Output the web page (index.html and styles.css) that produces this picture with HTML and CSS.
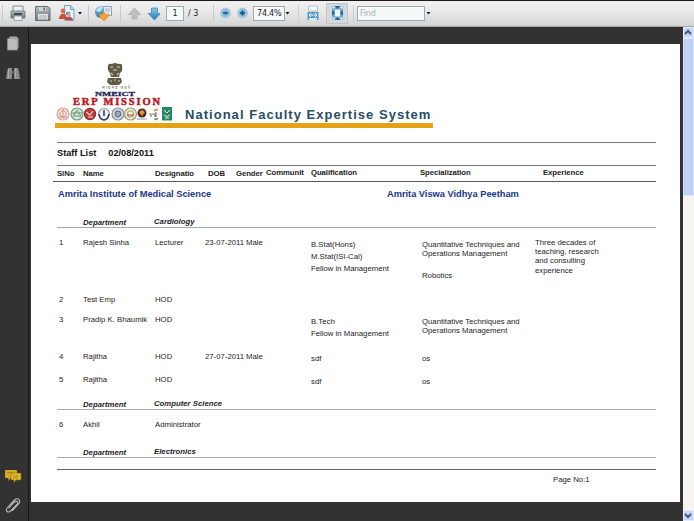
FILE: index.html
```html
<!DOCTYPE html>
<html lang="en">
<head>
<meta charset="utf-8">
<title>Staff List</title>
<link rel="stylesheet" href="styles.css">
</head>
<body>
<header class="toolbar">
  <svg width="160" height="26" viewBox="0 0 160 26">
    <defs>
      <linearGradient id="blue" x2="0" y2="1"><stop stop-color="#8cc8ec"/><stop offset="1" stop-color="#2377b4"/></linearGradient>
      <linearGradient id="metal" x2="0" y2="1"><stop stop-color="#b4bcc0"/><stop offset="1" stop-color="#6d757a"/></linearGradient>
      <radialGradient id="orb"><stop offset=".2" stop-color="#57a4d3"/><stop offset=".65" stop-color="#8cc5e6"/><stop offset="1" stop-color="#a9c4d4"/></radialGradient>
    </defs>
    <path d="M2.500 5v17M88.500 5v17M120.500 5v17" stroke="#c9c9c9"/>
    <path d="M13 6h10v6H13z" fill="#e9eff2" stroke="#858d91"/>
    <path d="M11 11h14v7H11z" fill="url(#metal)" stroke="#646b6f" stroke-width=".7"/>
    <path d="M14 13h8v2h-8z" fill="#454c50"/>
    <path d="M14 16h8v4.500h-8z" fill="#edf1f3" stroke="#7c8488" stroke-width=".7"/>
    <path d="M35.500 6.500H48l2 2v12H35.500z" fill="url(#metal)" stroke="#697176"/>
    <path d="M39 7h7v4h-7z" fill="#cdd4d7"/><path d="M43.500 7.500h1.500v3h-1.500z" fill="#5f676c"/>
    <path d="M38 14h10v5.500H38z" fill="#e2e6e8"/><path d="M39 16h8M39 18h8" stroke="#8b9397" stroke-width=".7"/>
    <path d="M64.500 5.500h6l3.500 3.500v11h-9.500z" fill="#e9f3f9" stroke="#6ea6c9"/>
    <path d="M70.500 5.500v4H74" fill="#b5d8ec" stroke="#6ea6c9"/>
    <circle cx="63" cy="11" r="2.400" fill="#dc6b51"/><path d="M59 19c0-7 8-7 8 0z" fill="#cf4b3c"/>
    <path d="M66 12h4v3h-4z" fill="#4b9bcb"/><circle cx="69" cy="15" r="2" fill="#e5a38b"/><path d="M65 20.500c0-5 8-5 8 0z" fill="#a95555"/>
    <path d="M78 12h4l-2 2.500z" fill="#111"/>
    <circle cx="101" cy="12" r="6" fill="url(#blue)"/><path d="M96 11c2-4 5-5 8-4-3 1-2 4-5 5z" fill="#c3e3f3"/>
    <path d="M103.500 6.500h8v9h-8z" fill="#e4ecf0" stroke="#8ba5b2"/><path d="M105 9h5M105 11h5" stroke="#8ba5b2" stroke-width=".7"/>
    <path d="m104 12 1.500 2.500 3-.5-.5 3-4 4-4-4-1-3 3 .5z" fill="#f5a42b" stroke="#d98217" stroke-width=".6"/>
    <path d="m134.500 8 6.200 6.500H137V19h-5v-4.500h-3.700z" fill="#bfbfbf" stroke="#aaa" stroke-width=".7"/>
    <path d="m154.500 20-6.300-6.500h3.300V8h6v5.500h3z" fill="url(#blue)" stroke="#2f7fb5" stroke-width=".7"/>
  </svg>
  <span class="field pageno">1</span><span class="total">/ 3</span>
  <svg class="zoomers" width="40" height="26" viewBox="213 0 40 26">
    <path d="M213.500 5v17" stroke="#c9c9c9"/>
    <circle cx="225.500" cy="13" r="5" fill="url(#orb)" stroke="#b0bec6" stroke-width=".6"/><path d="M223 13h5" stroke="#174f79" stroke-width="1.500"/>
    <circle cx="242.500" cy="13" r="5" fill="url(#orb)" stroke="#b0bec6" stroke-width=".6"/><path d="M240 13h5M242.500 10.500v5" stroke="#174f79" stroke-width="1.500"/>
  </svg>
  <span class="field zoom">74.4%</span>
  <svg width="72" height="26" viewBox="285 0 72 26">
    <path d="M285.500 12h4l-2 2.500z" fill="#111"/>
    <path d="M298.500 5v17M353.500 5v17" stroke="#cdcdcd"/>
    <path d="M308.500 6h9v5h-9z" fill="#f5fafc" stroke="#9fb8c6" stroke-width=".8"/>
    <path d="M307.500 12h11v8h-11z" fill="#549bc8"/><path d="M309 18h8v2h-8z" fill="#d7e9f4"/>
    <path d="M309 15h8M311 13l-2 2 2 2M315 13l2 2-2 2" stroke="#f4fbff" fill="none"/>
    <path d="M326.500 3.500h21v20h-21z" fill="#d6d8d9" stroke="#bfc4c7"/>
    <path d="M332 6h11v14h-11z" fill="#6ba8d0"/>
    <path d="m335 6 2.500 3L340 6zM335 20l2.500-3 2.500 3zM332 10.500l3 2.500-3 2.500zM343 10.500l-3 2.500 3 2.500z" fill="#245f92"/>
    <path d="M335 9.500h5v7h-5z" fill="#e9f5fb"/><path d="M332.500 6.500h2v2h-2zM340.500 6.500h2v2h-2zM332.500 17.500h2v2h-2zM340.500 17.500h2v2h-2z" fill="#f4fbff"/>
  </svg>
  <span class="field find">Find</span>
  <svg width="10" height="26"><path d="M1.500 12h4l-2 2.500z" fill="#111"/></svg>
</header>
<div class="viewer">
  <nav class="rail">
    <svg width="28" height="70" viewBox="0 27 28 70">
      <path d="M9.500 36.500h7l2 2V48h-9z" fill="#aaa"/><path d="M7.500 38.500h7l3 2.500v9h-10z" fill="#bbb" stroke="#929292" stroke-width=".7"/>
      <path d="M8 68h4v11H6l1-7zM14 68h4l1 4 1 7h-6z" fill="#8b8b8b"/><path d="M11.500 71h3v3h-3z" fill="#666"/><path d="M8.500 69v9M15.500 69v9" stroke="#aaa"/>
    </svg>
    <svg width="28" height="55" viewBox="0 466 28 55">
      <path d="M6 470h10q1 0 1 1v6q0 1-1 1h-5l-2.500 3v-3H6q-1 0-1-1v-6q0-1 1-1z" fill="#d6ab20"/>
      <path d="M12 473h8q1 0 1 1v5q0 1-1 1h-4l-2 2.500V480h-2q-1 0-1-1v-5q0-1 1-1z" fill="#e4bc2d" stroke="#7d6415" stroke-width=".6"/>
      <path d="M13 476h6M13 478h5M7 472.500h6" stroke="#8d7218" stroke-width=".7"/>
      <path d="m8.500 508.500 6-6.500c2-2 4.500 0 2.500 2.500l-6.500 6.500c-3 2.500-5.500-.5-3-3.500l7-7.500c3.500-3 7 .5 4 4L12 511" fill="none" stroke="#b9b9b9" stroke-width="1.100"/>
    </svg>
  </nav>
  <main class="page">
    <div class="banner">
      <svg class="logo" width="118" height="60" viewBox="56 62 118 60">
        <g fill="#5f5945">
          <path d="M108 66q0-3 4-2 3-2 6 0 5-1 4 3 1 4-2 6l-1 4h-8l-1-4q-3-3-2-7z"/>
          <path d="M108 78h13l1 4-3 3h-9l-3-3z"/>
        </g>
        <path d="M110 67h3M117 67h3M113 70h4M111 73l2 2M119 73l-2 2M110 81h2M114 80h2M118 81h2" stroke="#d4cdb8" stroke-width="1.100"/>
        <text x="102" y="89" class="motto" textLength="28">सत्यमेव जयते</text>
        <text x="95" y="95.700" class="nme" textLength="40" lengthAdjust="spacingAndGlyphs">NMEICT</text>
        <text x="73" y="105.300" class="erp" textLength="87">ERP MISSION</text>
        <g stroke-width="1.200">
          <circle cx="63" cy="114" r="6" fill="#f5dcd8" stroke="#d9a39c"/><path d="m59 114 4-4 4 4-4 4zM59 117h8M63 109v9" fill="none" stroke="#cf8078" stroke-width=".7"/>
          <circle cx="77" cy="114" r="6" fill="#d8e6d6" stroke="#74a081"/><path d="m73 116 4-6 4 6zM72 113h10" fill="none" stroke="#568464" stroke-width=".8"/>
          <circle cx="90" cy="114" r="5.600" fill="#bd3c38" stroke="#8e2f30"/><path d="m86 112 4 3 3-4M88 117h5" fill="none" stroke="#f5dad0"/>
          <circle cx="104" cy="114" r="5.500" fill="#eef0f4" stroke="#8b90a1"/><path d="M99 114q1 6 5 6t5-6M104 110v6" fill="none" stroke="#353c59" stroke-width="1.500"/>
          <circle cx="118" cy="114" r="6" fill="#d7dbe0" stroke="#858d9e"/><circle cx="118" cy="114" r="2.800" fill="#a0abb9" stroke="#68758a"/>
          <circle cx="130.500" cy="114" r="6" fill="#eee5cd" stroke="#ad9b76"/><circle cx="130.500" cy="114" r="3" fill="#f7f1df" stroke="#91af86"/><path d="M127 115h7" stroke="#cc5746"/>
          <circle cx="142" cy="113" r="4.500" fill="#4b2830"/><path d="m139 112 3-2 3 2-3 4z" fill="#e39829"/><path d="M137 119h10" stroke="#aaa"/>
          <path d="M149 114h2v3m1-3h3v3m1-5v5M154 111l4-2M155 120l3-2" stroke="#8a7b77" fill="none"/><path d="M154 110h4" stroke="#dc9b33"/><path d="M154 119h4" stroke="#62a067"/>
        </g>
        <path d="M162 107h10v13.500h-10z" fill="#278763"/><path d="m164 110 3 3 3-3M164 115q3 3 6 0M165 118h4" fill="none" stroke="#d9efe1"/>
      </svg>
      <h1>National Faculty Expertise System</h1>
    </div>
    <section class="report">
      <div class="title"><span>Staff List</span><span>02/08/2011</span></div>
      <div class="heads cols"><b>SlNo</b><b>Name</b><b>Designatio</b><b class="dob">DOB</b><b class="gender">Gender</b><b class="up">Communit</b><b class="up">Qualification</b><b class="up spec">Specialization</b><b class="up exp">Experience</b></div>
      <div class="institute"><span>Amrita Institute of Medical Science</span><span>Amrita Viswa Vidhya Peetham</span></div>
      <div class="dept"><span>Department</span><span>Cardiology</span></div>
      <div class="row cols r1"><span class="num">1</span><span>Rajesh Sinha</span><span>Lecturer</span><span>23-07-2011</span><span>Male</span><span></span>
        <div class="quals"><p>B.Stat(Hons)</p><p>M.Stat(ISI-Cal)</p><p>Fellow in Management</p></div>
        <div class="specs"><p>Quantitative Techniques and<br>Operations Management</p><p class="next">Robotics</p></div>
        <div class="years">Three decades of<br>teaching, research<br>and consulting<br>experience</div></div>
      <div class="row cols r2"><span class="num">2</span><span>Test Emp</span><span>HOD</span></div>
      <div class="row cols r3"><span class="num">3</span><span>Pradip K. Bhaumik</span><span>HOD</span><span></span><span></span><span></span>
        <div class="quals"><p>B.Tech</p><p>Fellow in Management</p></div>
        <div class="specs"><p>Quantitative Techniques and<br>Operations Management</p></div></div>
      <div class="row cols r4"><span class="num">4</span><span>Rajitha</span><span>HOD</span><span>27-07-2011</span><span>Male</span><span></span><div class="quals">sdf</div><div class="specs">os</div></div>
      <div class="row cols r5"><span class="num">5</span><span>Rajitha</span><span>HOD</span><span></span><span></span><span></span><div class="quals">sdf</div><div class="specs">os</div></div>
      <div class="dept"><span>Department</span><span>Computer Science</span></div>
      <div class="row cols r6"><span class="num">6</span><span>Akhil</span><span>Administrator</span></div>
      <div class="dept"><span>Department</span><span>Electronics</span></div>
      <footer><span>Page No:1</span></footer>
    </section>
  </main>
  <aside class="scroll">
    <div class="arrow"><svg width="10" height="10"><path d="m2 6 3-3 3 3" fill="none" stroke="#41587f" stroke-width="2"/></svg></div>
    <div class="thumb"></div>
    <div class="arrow end"><svg width="10" height="10"><path d="m2 3 3 3 3-3" fill="none" stroke="#41587f" stroke-width="2"/></svg></div>
  </aside>
</div>
</body>
</html>
```
FILE: styles.css
```css
* { box-sizing: border-box; }
body { margin: 0; width: 694px; height: 521px; overflow: hidden; background: #323232; font: 7.75px/9px "Liberation Sans", Arial, sans-serif; color: #1c1c26; }
p, h1 { margin: 0; font-size: inherit; }
svg { display: block; flex: none; }
span, b { white-space: nowrap; }

.toolbar { display: flex; height: 27px; background: linear-gradient(#f1f1f1, #e9e9e9 40%, #d4d4d4); border-top: 1px solid #1d191b; border-bottom: 1px solid #a6a6a6; }
.toolbar svg { margin-top: -1px; }
.field { height: 15px; margin-top: 5px; border: 1px solid #a3a8ab; background: #f6f9fa; font: 8px/13px "DejaVu Sans", sans-serif; color: #222; letter-spacing: -.2px; }
.pageno { width: 18px; margin-left: 6px; text-align: center; }
.total { width: 29px; padding-left: 4px; font: 8px/25px "DejaVu Sans", sans-serif; }
.zoom { width: 32px; padding-left: 3px; }
.find { width: 68px; padding-left: 2px; color: #aaa; }

.viewer { display: flex; height: 494px; }
.rail { display: flex; flex-direction: column; justify-content: space-between; width: 29px; height: 494px; border-right: 1px solid #171717; }
.page { display: flow-root; width: 649px; height: 458px; margin: 17px 3px 0 2px; background: #fff; }
.banner { display: flex; align-items: flex-start; width: 378px; height: 66px; margin: 18px 0 0 24px; border-bottom: 5px solid #e5a313; }
.logo { margin-left: 1px; }
.motto { font: 4px "Noto Sans", sans-serif; fill: #666; }
.nme { font: bold 7px "Liberation Serif", serif; fill: #1e2556; stroke: #1e2556; stroke-width: .3px; }
.erp { font: bold 10.5px "Liberation Serif", serif; fill: #bc1824; stroke: #bc1824; stroke-width: .5px; }
h1 { margin: 46px 0 0 11px; font: bold 13px/14px "Liberation Sans", sans-serif; letter-spacing: 1.03px; white-space: nowrap; color: #284d67; }

.report { width: 603px; margin: 14px 0 0 22px; }
.title { display: flex; gap: 12px; height: 23px; margin-left: 4px; padding-top: 4px; border-top: 1px solid #777; font: bold 9.2px/12px "Liberation Sans", sans-serif; color: #111; }
.cols { display: grid; grid-template-columns: 26px 72px 50px 41px 20px 45px 111px 113px 1fr; padding-left: 4px; }
.heads { height: 17px; border-bottom: 1px solid #555; padding-top: 4px; background: linear-gradient(#777, #777) 4px 0 / 100% 1px no-repeat; }
.heads b { letter-spacing: -.07px; }
.dob { margin-left: 3px; }
.gender { margin-left: -10px; }
.up { margin-top: -1px; }
.spec { margin-left: -2px; }
.exp { margin-left: 8px; }
.institute { display: grid; grid-template-columns: 329px 1fr; height: 34px; padding: 6px 0 0 5px; font: bold 9.25px/12px "Liberation Sans", sans-serif; color: #173788; }
.dept { display: grid; grid-template-columns: 71px 1fr; height: 12px; margin-left: 4px; padding: 2px 0 0 26px; border-bottom: 1px solid #aaa; font-weight: bold; font-style: italic; line-height: 9px; }
.dept span + span { margin-top: -1px; }
.row { padding-top: 10px; }
.row .num { padding-left: 2px; }
.row .quals, .row .specs { padding-top: 2px; }
.quals p { height: 12px; }
.specs .next { margin-top: 13px; }
.years { line-height: 9.2px; }
.r1 { height: 57px; }
.r2 { height: 20px; }
.r3 { height: 37px; }
.r4 { height: 23px; }
.r5 { height: 33px; }
.r6 { height: 36px; }
footer { margin-left: 4px; height: 30px; margin-top: 11px; padding: 5px 0 0 496px; border-top: 1px solid #666; }

.scroll { display: flex; flex-direction: column; width: 11px; height: 494px; background: #f5f4ef; }
.arrow { width: 11px; height: 11px; background: #c6d5fb; border: 1px solid #e5ecff; }
.arrow svg { margin-left: -1px; }
.thumb { height: 158px; background: linear-gradient(90deg, #b6c8f4, #c5d5fc 30%, #bacdf8); border: 1px solid #dce5fb; }
.end { margin-top: auto; }
```
